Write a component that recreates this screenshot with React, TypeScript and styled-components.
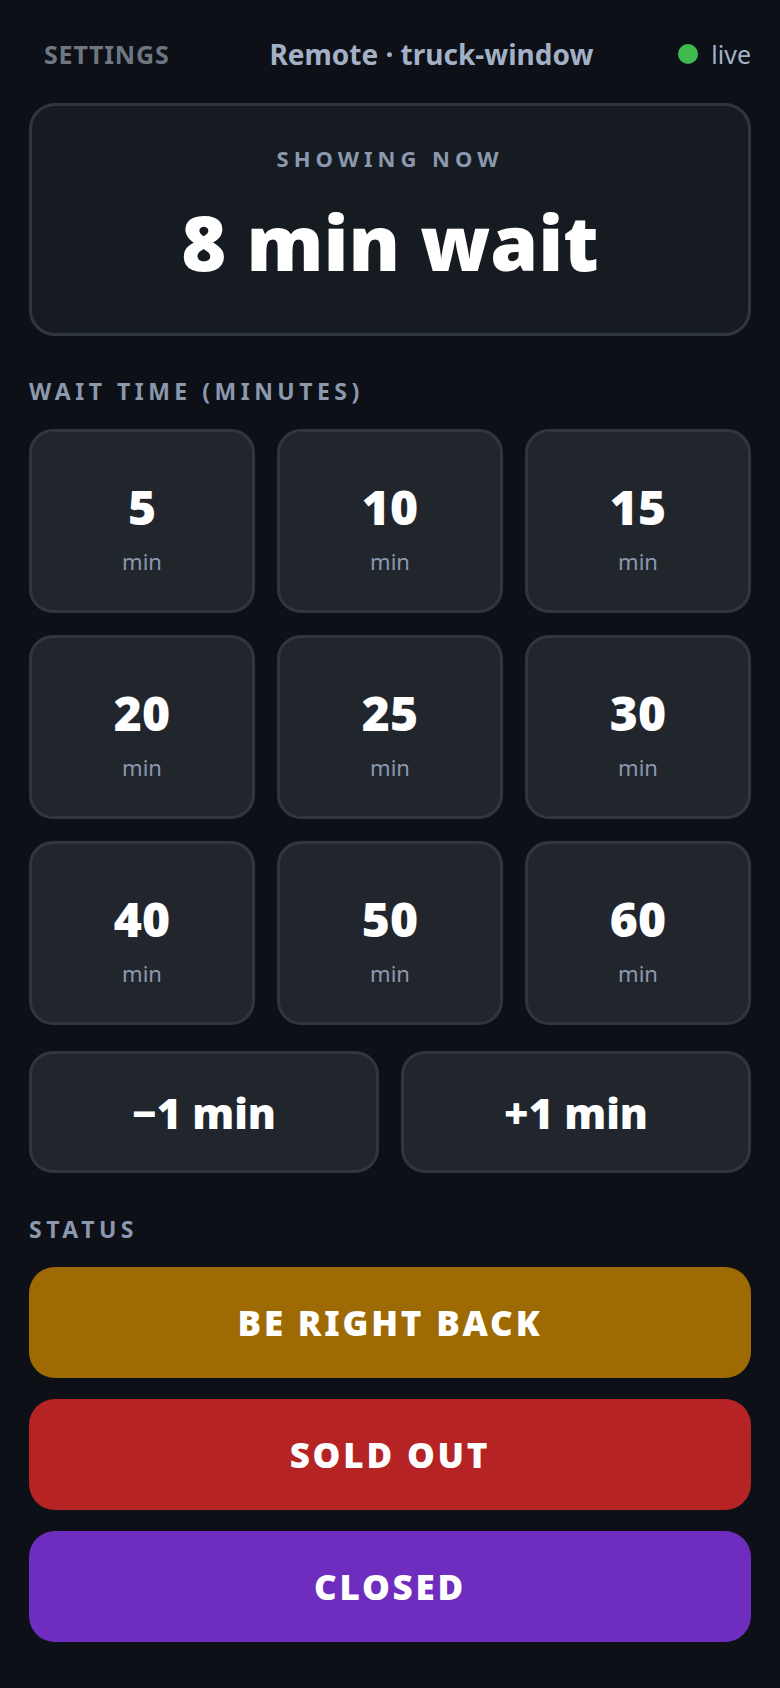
import React from 'react';
import styled, { createGlobalStyle } from 'styled-components';

const GlobalStyle = createGlobalStyle`
  html, body {
    margin: 0;
    padding: 0;
    background: #0d1117;
  }
  body {
    font-family: "Noto Sans", "Open Sans", sans-serif;
    color: #ffffff;
  }
`;

const Page = styled.div`
  min-height: 1688px;
  box-sizing: border-box;
  padding: 28px 29px 40px;
  display: flex;
  flex-direction: column;
  background: #0d1117;
`;

const Header = styled.header`
  display: flex;
  align-items: center;
  justify-content: space-between;
  height: 52px;
  margin-bottom: 23px;
`;

const SettingsButton = styled.button`
  background: none;
  border: none;
  padding: 0 15px;
  font-family: inherit;
  font-size: 25px;
  font-weight: 700;
  letter-spacing: 0.8px;
  color: #6e7681;
  cursor: pointer;
`;

const Title = styled.div`
  font-size: 28px;
  font-weight: 700;
  color: #a3b0c6;
`;

const Live = styled.div`
  display: flex;
  align-items: center;
  gap: 13px;
  font-size: 25px;
  color: #a3b0c6;
`;

const Dot = styled.span`
  width: 20px;
  height: 20px;
  border-radius: 50%;
  background: #3fb950;
`;

const NowCard = styled.section`
  border: 3px solid #30363d;
  border-radius: 26px;
  background: #161b22;
  height: 233px;
  box-sizing: border-box;
  display: flex;
  flex-direction: column;
  align-items: center;
  padding-top: 37px;
`;

const NowLabel = styled.div`
  font-size: 22px;
  font-weight: 700;
  letter-spacing: 5px;
  color: #8b98ad;
`;

const NowValue = styled.div`
  margin-top: 27px;
  font-size: 77px;
  font-weight: 900;
  line-height: 1.1;
  color: #ffffff;
`;

const SectionLabel = styled.div<{ $top: number }>`
  margin-top: ${(p) => p.$top}px;
  margin-bottom: 24px;
  font-size: 23px;
  font-weight: 700;
  letter-spacing: 4.5px;
  color: #8b98ad;
  line-height: 28px;
`;

const PresetGrid = styled.div`
  display: grid;
  grid-template-columns: repeat(3, 1fr);
  gap: 22px;
`;

const Tile = styled.button`
  height: 184px;
  border: 3px solid #30363d;
  border-radius: 24px;
  background: #21262d;
  color: #ffffff;
  font-family: inherit;
  display: flex;
  flex-direction: column;
  align-items: center;
  justify-content: center;
  gap: 14px;
  padding-top: 14px;
  cursor: pointer;
`;

const TileNumber = styled.span`
  font-size: 48px;
  font-weight: 900;
  line-height: 1.1;
`;

const TileUnit = styled.span`
  font-size: 22px;
  line-height: 1.2;
  color: #8b98ad;
`;

const AdjustRow = styled.div`
  display: grid;
  grid-template-columns: 1fr 1fr;
  gap: 22px;
  margin-top: 26px;
`;

const AdjustButton = styled.button`
  height: 122px;
  border: 3px solid #30363d;
  border-radius: 24px;
  background: #21262d;
  color: #ffffff;
  font-family: inherit;
  font-size: 42px;
  font-weight: 900;
  cursor: pointer;
`;

const StatusList = styled.div`
  display: flex;
  flex-direction: column;
  gap: 21px;
`;

const StatusButton = styled.button<{ $bg: string }>`
  height: 111px;
  border: none;
  border-radius: 26px;
  background: ${(p) => p.$bg};
  color: #ffffff;
  font-family: inherit;
  font-size: 35px;
  font-weight: 900;
  letter-spacing: 2.8px;
  cursor: pointer;
`;

const presets = [5, 10, 15, 20, 25, 30, 40, 50, 60];

const statuses = [
  { label: 'BE RIGHT BACK', bg: '#9e6a03' },
  { label: 'SOLD OUT', bg: '#b62324' },
  { label: 'CLOSED', bg: '#6e2dbe' },
];

const App: React.FC = () => {
  return (
    <>
      <GlobalStyle />
      <Page>
        <Header>
          <SettingsButton>SETTINGS</SettingsButton>
          <Title>Remote · truck-window</Title>
          <Live>
            <Dot />
            live
          </Live>
        </Header>

        <NowCard>
          <NowLabel>SHOWING NOW</NowLabel>
          <NowValue>8 min wait</NowValue>
        </NowCard>

        <SectionLabel $top={41}>WAIT TIME (MINUTES)</SectionLabel>
        <PresetGrid>
          {presets.map((m) => (
            <Tile key={m}>
              <TileNumber>{m}</TileNumber>
              <TileUnit>min</TileUnit>
            </Tile>
          ))}
        </PresetGrid>

        <AdjustRow>
          <AdjustButton>−1 min</AdjustButton>
          <AdjustButton>+1 min</AdjustButton>
        </AdjustRow>

        <SectionLabel $top={42}>STATUS</SectionLabel>
        <StatusList>
          {statuses.map((s) => (
            <StatusButton key={s.label} $bg={s.bg}>
              {s.label}
            </StatusButton>
          ))}
        </StatusList>
      </Page>
    </>
  );
};

export default App;
